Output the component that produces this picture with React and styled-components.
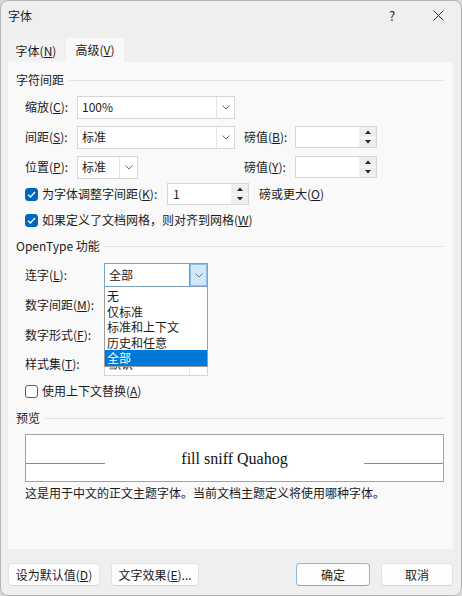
import React from 'react';
import styled, { createGlobalStyle } from 'styled-components';

const GlobalStyle = createGlobalStyle`
  html, body {
    margin: 0;
    padding: 0;
    background: #d9d9d9;
  }
`;

const Window = styled.div`
  width: 462px;
  height: 596px;
  box-sizing: border-box;
  border: 1px solid #b4b4b4;
  border-radius: 8px;
  overflow: hidden;
  background: #efefef;
  display: flex;
  flex-direction: column;
  font-family: "Noto Sans CJK SC", sans-serif;
  font-size: 12px;
  line-height: 16px;
  color: #1b1b1b;
`;

const TitleBar = styled.div`
  height: 29px;
  display: flex;
  align-items: center;
  padding-left: 7px;
  flex-shrink: 0;
`;

const Title = styled.span`
  flex: 1;
`;

const CaptionButton = styled.div`
  width: 46px;
  height: 29px;
  display: flex;
  align-items: center;
  justify-content: center;
  font-size: 13px;
  color: #2b2b2b;
`;

const TabStrip = styled.div`
  height: 32px;
  display: flex;
  align-items: flex-end;
  gap: 2px;
  padding-left: 7px;
  flex-shrink: 0;
`;

const Tab = styled.div`
  width: ${p => p.$w}px;
  height: ${p => (p.$active ? 24 : 22)}px;
  display: flex;
  align-items: center;
  justify-content: center;
  background: ${p => (p.$active ? '#f9f9f9' : '#f2f2f2')};
  padding-bottom: ${p => (p.$active ? 0 : 1)}px;
  box-sizing: border-box;
`;

const Panel = styled.div`
  height: 487px;
  margin: 0 8px 0 7px;
  padding: 0 9px 0 8px;
  background: #f9f9f9;
  box-sizing: border-box;
  display: flex;
  flex-direction: column;
  flex-shrink: 0;
`;

const GroupHead = styled.div`
  height: 18px;
  margin-top: ${p => p.$top}px;
  display: flex;
  align-items: center;
  gap: 5px;
`;

const Rule = styled.div`
  flex: 1;
  height: 1px;
  background: #e2e2e2;
`;

const GroupBody = styled.div`
  margin-top: ${p => p.$top || 0}px;
  padding-left: 9px;
  display: flex;
  flex-direction: column;
`;

const Row = styled.div`
  height: ${p => p.$h}px;
  display: flex;
  align-items: center;
`;

const Cell = styled.div`
  width: ${p => p.$w}px;
  flex-shrink: 0;
  display: flex;
  align-items: center;
  position: relative;
  white-space: nowrap;
`;

const SubLabel = styled.span`
  width: 51px;
  margin-left: 9px;
  flex-shrink: 0;
`;

const Combo = styled.div`
  width: ${p => p.$w}px;
  height: ${p => p.$h || 23}px;
  box-sizing: border-box;
  border: 1px solid ${p => (p.$focused ? '#7da2c8' : '#d6d6d6')};
  background: #fff;
  display: flex;
`;

const ComboValue = styled.div`
  flex: 1;
  padding-left: 4px;
  display: flex;
  align-items: center;
  overflow: hidden;
  white-space: nowrap;
`;

const ComboArrow = styled.div`
  width: 17px;
  display: flex;
  align-items: center;
  justify-content: center;
  border-left: 1px solid ${p => (p.$focused ? '#5e9ad6' : '#e4e4e4')};
  background: ${p => (p.$focused ? '#d3e7f8' : '#fff')};
  box-shadow: ${p => (p.$focused ? 'inset 0 0 0 1px #8fbde6' : 'none')};
`;

const DropList = styled.div`
  position: absolute;
  top: 100%;
  left: 0;
  width: 100%;
  box-sizing: border-box;
  border: 1px solid #9c9c9c;
  border-top: none;
  background: #fff;
  padding-top: 1px;
  z-index: 2;
`;

const DropItem = styled.div`
  height: 15.5px;
  line-height: 15.5px;
  padding-left: 2px;
  background: ${p => (p.$selected ? '#0078d7' : 'transparent')};
  color: ${p => (p.$selected ? '#fff' : '#1b1b1b')};
`;

const Spin = styled.div`
  width: 82px;
  height: 22px;
  box-sizing: border-box;
  border: 1px solid #d6d6d6;
  background: #fff;
  display: flex;
  margin-left: ${p => p.$ml || 0}px;
  flex-shrink: 0;
`;

const SpinValue = styled.div`
  flex: 1;
  padding-left: 5px;
  display: flex;
  align-items: center;
`;

const SpinButtons = styled.div`
  width: 17px;
  display: flex;
  flex-direction: column;
  gap: 1px;
  background: #fff;
`;

const SpinHalf = styled.div`
  flex: 1;
  display: flex;
  align-items: center;
  justify-content: center;
  background: #efefef;
`;

const CheckBox = styled.div`
  width: 13px;
  height: 13px;
  box-sizing: border-box;
  border-radius: 3px;
  border: 1px solid ${p => (p.$checked ? '#0067c0' : '#5d5d5d')};
  background: ${p => (p.$checked ? '#0067c0' : '#fff')};
  display: flex;
  align-items: center;
  justify-content: center;
  margin-right: 4px;
  flex-shrink: 0;
`;

const Suffix = styled.span`
  margin-left: 10px;
`;

const PreviewBox = styled.div`
  margin-top: 7px;
  height: 48px;
  box-sizing: border-box;
  border: 1px solid #a3a3a3;
  background: #fff;
  display: flex;
  justify-content: space-between;
`;

const Baseline = styled.div`
  width: 79px;
  height: 1px;
  margin-top: 28px;
  background: #8a8a8a;
`;

const PreviewText = styled.div`
  font-family: "Liberation Serif", serif;
  font-size: 16px;
  line-height: 20px;
  margin-top: 14px;
  color: #111;
`;

const Note = styled.div`
  margin-top: 3px;
  padding-left: 9px;
  white-space: nowrap;
`;

const Footer = styled.div`
  flex: 1;
  display: flex;
  align-items: flex-start;
  padding: 14px 8px 0 7px;
`;

const Button = styled.div`
  width: ${p => p.$w}px;
  height: 23px;
  box-sizing: border-box;
  margin-left: ${p => p.$ml || 0}px;
  border: 1px solid ${p => (p.$primary ? '#8fb7dc' : '#e3e3e3')};
  border-bottom-color: ${p => (p.$primary ? '#7fa9d2' : '#d5d5d5')};
  border-radius: 4px;
  background: #fdfdfd;
  display: flex;
  align-items: center;
  justify-content: center;
  white-space: nowrap;
`;

const Chevron = ({ color = '#6d6d6d' }) => (
  <svg width="8" height="5" viewBox="0 0 8 5">
    <path d="M0.5 0.5 L4 4 L7.5 0.5" fill="none" stroke={color} strokeWidth="1" />
  </svg>
);

const Triangle = ({ up }) => (
  <svg width="6" height="4" viewBox="0 0 6 4">
    <path d={up ? 'M0 4 L3 0.5 L6 4 Z' : 'M0 0 L3 3.5 L6 0 Z'} fill="#222" />
  </svg>
);

const Tick = () => (
  <svg width="9" height="7" viewBox="0 0 9 7">
    <path d="M1 3.6 L3.4 6 L8 1" fill="none" stroke="#fff" strokeWidth="1.3" />
  </svg>
);

const Select = ({ w, h, value, focused, children }) => (
  <Combo $w={w} $h={h} $focused={focused}>
    <ComboValue>{value}</ComboValue>
    <ComboArrow $focused={focused}>
      <Chevron color={focused ? '#4a7fb5' : '#6d6d6d'} />
    </ComboArrow>
    {children}
  </Combo>
);

const Spinner = ({ value, ml }) => (
  <Spin $ml={ml}>
    <SpinValue>{value}</SpinValue>
    <SpinButtons>
      <SpinHalf><Triangle up /></SpinHalf>
      <SpinHalf><Triangle /></SpinHalf>
    </SpinButtons>
  </Spin>
);

const ligatures = ['无', '仅标准', '标准和上下文', '历史和任意', '全部'];

export default function App() {
  return (
    <>
      <GlobalStyle />
      <Window>
        <TitleBar>
          <Title>字体</Title>
          <CaptionButton>?</CaptionButton>
          <CaptionButton>
            <svg width="11" height="11" viewBox="0 0 11 11">
              <path d="M0.5 0.5 L10.5 10.5 M10.5 0.5 L0.5 10.5" stroke="#2b2b2b" strokeWidth="1" />
            </svg>
          </CaptionButton>
        </TitleBar>

        <TabStrip>
          <Tab $w={56}>字体(<u>N</u>)</Tab>
          <Tab $w={58} $active>高级(<u>V</u>)</Tab>
        </TabStrip>

        <Panel>
          <GroupHead $top={9}>
            <span>字符间距</span>
            <Rule />
          </GroupHead>
          <GroupBody $top={3}>
            <Row $h={30}>
              <Cell $w={52}>缩放(<u>C</u>):</Cell>
              <Select w={158} value="100%" />
            </Row>
            <Row $h={30}>
              <Cell $w={52}>间距(<u>S</u>):</Cell>
              <Select w={158} value="标准" />
              <SubLabel>磅值(<u>B</u>):</SubLabel>
              <Spinner value="" />
            </Row>
            <Row $h={30}>
              <Cell $w={52}>位置(<u>P</u>):</Cell>
              <Cell $w={158}>
                <Select w={61} value="标准" />
              </Cell>
              <SubLabel>磅值(<u>Y</u>):</SubLabel>
              <Spinner value="" />
            </Row>
            <Row $h={24}>
              <CheckBox $checked><Tick /></CheckBox>
              <Cell $w={125}>为字体调整字间距(<u>K</u>):</Cell>
              <Spinner value="1" />
              <Suffix>磅或更大(<u>O</u>)</Suffix>
            </Row>
            <Row $h={28}>
              <CheckBox $checked><Tick /></CheckBox>
              <span>如果定义了文档网格，则对齐到网格(<u>W</u>)</span>
            </Row>
          </GroupBody>

          <GroupHead $top={3}>
            <span>OpenType 功能</span>
            <Rule />
          </GroupHead>
          <GroupBody $top={5}>
            <Row $h={30}>
              <Cell $w={79}>连字(<u>L</u>):</Cell>
              <Cell $w={104}>
                <Select w={104} h={24} value="全部" focused />
                <DropList>
                  {ligatures.map(item => (
                    <DropItem key={item} $selected={item === '全部'}>{item}</DropItem>
                  ))}
                </DropList>
              </Cell>
            </Row>
            {/* these two sit fully under the open list */}
            <Row $h={30}>
              <Cell $w={79}>数字间距(<u>M</u>):</Cell>
              <Select w={104} h={24} value="" />
            </Row>
            <Row $h={30}>
              <Cell $w={79}>数字形式(<u>F</u>):</Cell>
              <Select w={104} h={24} value="" />
            </Row>
            <Row $h={28}>
              <Cell $w={79}>样式集(<u>T</u>):</Cell>
              <Select w={104} h={24} value="默认" />
            </Row>
            <Row $h={26}>
              <CheckBox />
              <span>使用上下文替换(<u>A</u>)</span>
            </Row>
          </GroupBody>

          <GroupHead $top={5}>
            <span>预览</span>
            <Rule />
          </GroupHead>
          <GroupBody>
            <PreviewBox>
              <Baseline />
              <PreviewText>fill sniff Quahog</PreviewText>
              <Baseline />
            </PreviewBox>
          </GroupBody>
          <Note>这是用于中文的正文主题字体。当前文档主题定义将使用哪种字体。</Note>
        </Panel>

        <Footer>
          <Button $w={92}>设为默认值(<u>D</u>)</Button>
          <Button $w={88} $ml={11}>文字效果(<u>E</u>)...</Button>
          <Button $w={74} $ml={97} $primary>确定</Button>
          <Button $w={72} $ml={11}>取消</Button>
        </Footer>
      </Window>
    </>
  );
}
